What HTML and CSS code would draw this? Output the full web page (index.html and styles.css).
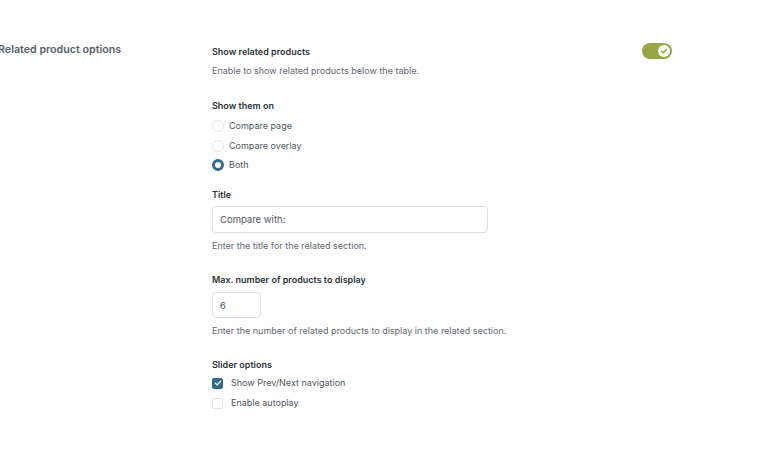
FILE: index.html
```html
<!DOCTYPE html>
<html>
<head>
<meta charset="utf-8">
<link rel="stylesheet" href="styles.css">
</head>
<body>
<div class="page">
  <div class="side">
    <h2 class="side-title">Related product options</h2>
  </div>
  <div class="main">
    <div class="field field-toggle">
      <div class="toggle-text">
        <div class="label">Show related products</div>
        <div class="desc desc-first">Enable to show related products below the table.</div>
      </div>
      <div class="toggle">
        <span class="knob">
          <svg width="8" height="8" viewBox="0 0 8 8"><path d="M1.6 4.2 L3.3 5.8 L6.4 2.4" fill="none" stroke="#8e9a3c" stroke-width="1.3" stroke-linecap="round" stroke-linejoin="round"/></svg>
        </span>
      </div>
    </div>

    <div class="field field-radios">
      <div class="label">Show them on</div>
      <div class="options">
        <div class="option"><span class="radio"></span><span>Compare page</span></div>
        <div class="option"><span class="radio"></span><span>Compare overlay</span></div>
        <div class="option"><span class="radio checked"></span><span>Both</span></div>
      </div>
    </div>

    <div class="field field-title">
      <div class="label">Title</div>
      <div class="input input-wide">Compare with:</div>
      <div class="desc">Enter the title for the related section.</div>
    </div>

    <div class="field field-max">
      <div class="label">Max. number of products to display</div>
      <div class="input input-small">6</div>
      <div class="desc">Enter the number of related products to display in the related section.</div>
    </div>

    <div class="field field-slider">
      <div class="label">Slider options</div>
      <div class="checks">
        <div class="check-row"><span class="checkbox checked"><svg width="8" height="8" viewBox="0 0 8 8"><path d="M1.5 4.3 L3.2 5.9 L6.5 2.3" fill="none" stroke="#fff" stroke-width="1.4" stroke-linecap="round" stroke-linejoin="round"/></svg></span><span>Show Prev/Next navigation</span></div>
        <div class="check-row"><span class="checkbox"></span><span>Enable autoplay</span></div>
      </div>
    </div>
  </div>
</div>
</body>
</html>
```

FILE: styles.css
```css
* { box-sizing: border-box; }
html, body { margin: 0; padding: 0; background: #fff; }
body {
  font-family: Inter, "Noto Sans", sans-serif;
  color: #3c434a;
  width: 769px;
  height: 452px;
  overflow: hidden;
}
.page {
  display: grid;
  grid-template-columns: 212px 460px;
  padding-top: 42px;
}
.side { margin-left: -2px; padding-top: 1px; }
.side-title {
  margin: 0;
  font-size: 10.7px;
  font-weight: 600;
  color: #5a6168;
  line-height: 14px;
  white-space: nowrap;
}
.main { display: flex; flex-direction: column; }
.label {
  font-size: 9px;
  font-weight: 600;
  color: #2c3338;
  line-height: 12px;
}
.desc {
  font-size: 9px;
  color: #646970;
  line-height: 12px;
  margin-top: 7px;
}
.desc-first { margin-top: 7px; }
.field-toggle {
  display: flex;
  justify-content: space-between;
  align-items: flex-start;
  padding-top: 4px;
}
.toggle {
  width: 30px;
  height: 16px;
  border-radius: 8px;
  background: #9aa545;
  position: relative;
  margin-top: -3px;
  flex: none;
}
.knob {
  position: absolute;
  right: 2px;
  top: 2px;
  width: 12px;
  height: 12px;
  border-radius: 50%;
  background: #fff;
  display: flex;
  align-items: center;
  justify-content: center;
}
.field-radios { margin-top: 23px; }
.field-title { margin-top: 18px; }
.field-max { margin-top: 22px; }
.field-slider { margin-top: 22px; }
.options { display: flex; flex-direction: column; gap: 7.5px; margin-top: 8px; }
.option {
  display: flex;
  align-items: center;
  gap: 5px;
  font-size: 9px;
  color: #50575e;
  line-height: 12px;
}
.radio {
  width: 12px;
  height: 12px;
  border-radius: 50%;
  border: 1px solid #e4e6e8;
  background: #fff;
  flex: none;
}
.radio.checked {
  border: 3.5px solid #2f6b8c;
  background: #fff;
}
.input {
  height: 27px;
  border: 1px solid #dcdfe2;
  border-radius: 4px;
  font-size: 9.5px;
  color: #50575e;
  padding: 0 7px;
  display: flex;
  align-items: center;
}
.input-wide { width: 276px; margin-top: 5px; }
.input-small { width: 49px; height: 26px; margin-top: 6px; }
.checks { display: flex; flex-direction: column; gap: 8px; margin-top: 6px; }
.check-row {
  display: flex;
  align-items: center;
  gap: 8px;
  font-size: 9px;
  color: #50575e;
  line-height: 12px;
}
.checkbox {
  width: 11px;
  height: 11px;
  border: 1px solid #e2e4e7;
  border-radius: 2px;
  background: #fff;
  flex: none;
  display: flex;
  align-items: center;
  justify-content: center;
}
.checkbox.checked { background: #2f6b8c; border-color: #2f6b8c; }
```
